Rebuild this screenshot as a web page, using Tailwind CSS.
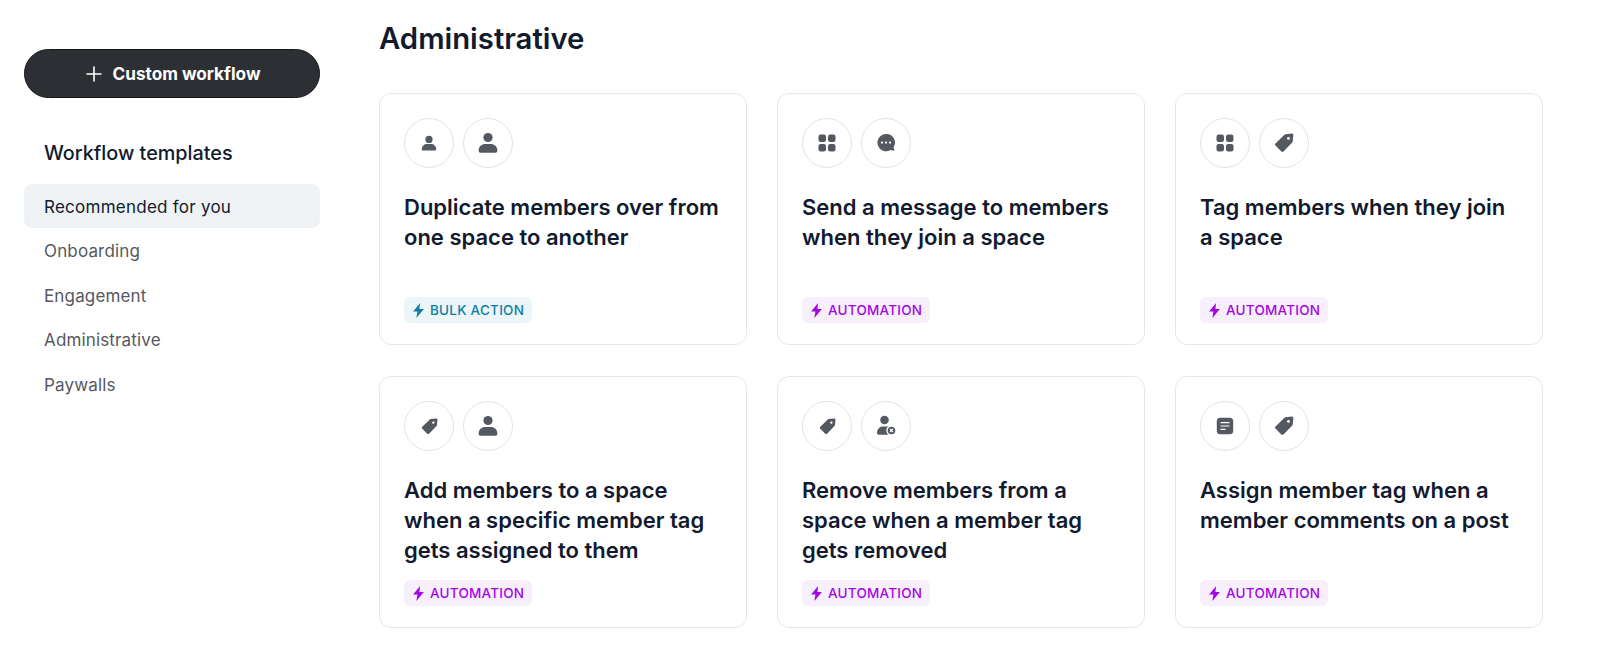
<!DOCTYPE html>
<html lang="en">
<head>
    <meta charset="UTF-8">
    <title>Workflow templates</title>
    <script src="https://cdn.jsdelivr.net/npm/@tailwindcss/browser@4"></script>
</head>
<body class="bg-white font-['Inter',sans-serif] overflow-hidden">
<div class="flex h-[655px] w-[1600px]">

    <!-- sidebar -->
    <aside class="w-[296px] ml-6 mr-[59px] shrink-0 pt-[49px]">
        <button class="flex items-center justify-center gap-[9px] w-full h-[49px] pt-[1px] pl-[2px] rounded-full bg-[#2c2f33] border border-[#14161a] text-white text-[17.2px] font-bold">
            <svg class="w-[18px] h-[18px]" viewBox="0 0 18 18" fill="none" stroke="currentColor" stroke-width="1.6"><path d="M9 1.500v15M1.500 9h15"/></svg>
            Custom workflow
        </button>
        <h2 class="mt-[43px] ml-5 text-[19.8px] leading-[24px] font-medium text-[#111a2e]">Workflow templates</h2>
        <nav class="mt-[19px] flex flex-col text-[17px] tracking-[0.15px] text-[#545861]">
            <a class="h-[44px] flex items-center px-5 pt-[3px] rounded-lg bg-[#f0f3f5] text-[#111a2e] tracking-[0.25px]">Recommended for you</a>
            <a class="h-[44.5px] flex items-center px-5 pt-[3px]">Onboarding</a>
            <a class="h-[44.5px] flex items-center px-5 pt-[3px]">Engagement</a>
            <a class="h-[44.5px] flex items-center px-5 pt-[3px]">Administrative</a>
            <a class="h-[44.5px] flex items-center px-5 pt-[3px]">Paywalls</a>
        </nav>
    </aside>

    <!-- main -->
    <main class="w-[1164px]">
        <h1 class="mt-[20px] text-[29.3px] leading-[38px] font-semibold text-[#111a2e]">Administrative</h1>
        <div class="mt-[35px] grid grid-cols-3 gap-x-[30px] gap-y-[31px]">

            <div class="h-[252px] rounded-xl border border-[#e4e7eb] px-6 pt-6 pb-[21px] flex flex-col">
                <div class="flex gap-[9px]">
                    <span class="w-[50px] h-[50px] rounded-full border border-[#e0e3e7] flex items-center justify-center text-[#545861]">
                        <svg class="w-[18px] h-[18px]" viewBox="0 0 18 18" fill="currentColor"><circle cx="9" cy="5.400" r="3.600"/><path d="M1.800 15.500c0-3.600 2.600-5.500 5.200-5.500h4c2.600 0 5.200 1.900 5.200 5.500 0 .6-.4 1-1 1H2.800c-.6 0-1-.4-1-1z"/></svg>
                    </span>
                    <span class="w-[50px] h-[50px] rounded-full border border-[#e0e3e7] flex items-center justify-center text-[#545861]">
                        <svg class="w-[20px] h-[22px]" viewBox="0 0 18 20" fill="currentColor"><circle cx="9" cy="5" r="4.200"/><path d="M0.500 17c0-4 3-6 6-6h5c3 0 6 2 6 6 0 1-.6 1.800-1.600 1.800H2.100c-1 0-1.600-.8-1.600-1.800z"/></svg>
                    </span>
                </div>
                <h3 class="mt-6 text-[22px] leading-[30px] font-semibold text-[#111a2e]">Duplicate members over from one space to another</h3>
                <span class="mt-auto self-start h-[26px] flex items-center gap-[5px] px-2 rounded-md bg-[#ecf5f8] text-[#0f7fa3] text-[13.5px] font-medium tracking-[0.25px]">
                    <svg class="w-[13px] h-[15px]" viewBox="0 0 12 14" fill="currentColor"><path d="M7.500 0 1 8h4l-1 6 7-8.500H6.800z"/></svg>
                    BULK ACTION
                </span>
            </div>

            <div class="h-[252px] rounded-xl border border-[#e4e7eb] px-6 pt-6 pb-[21px] flex flex-col">
                <div class="flex gap-[9px]">
                    <span class="w-[50px] h-[50px] rounded-full border border-[#e0e3e7] flex items-center justify-center text-[#545861]">
                        <svg class="w-[18px] h-[18px]" viewBox="0 0 18 18" fill="currentColor"><rect x="0.500" y="0.500" width="7.500" height="7.500" rx="2.200"/><rect x="10" y="0.500" width="7.500" height="7.500" rx="2.200"/><rect x="0.500" y="10" width="7.500" height="7.500" rx="2.200"/><rect x="10" y="10" width="7.500" height="7.500" rx="2.200"/></svg>
                    </span>
                    <span class="w-[50px] h-[50px] rounded-full border border-[#e0e3e7] flex items-center justify-center text-[#545861]">
                        <svg class="w-[20px] h-[20px]" viewBox="0 0 20 20"><path fill="currentColor" d="M10 1a8.600 8.600 0 1 0 4.600 15.900l3 .9c.5.100.8-.2.700-.7l-.9-2.600A8.600 8.600 0 0 0 10 1z"/><circle cx="6" cy="9.600" r="1.150" fill="#fff"/><circle cx="10" cy="9.600" r="1.150" fill="#fff"/><circle cx="14" cy="9.600" r="1.150" fill="#fff"/></svg>
                    </span>
                </div>
                <h3 class="mt-6 text-[22px] leading-[30px] font-semibold text-[#111a2e]">Send a message to members when they join a space</h3>
                <span class="mt-auto self-start h-[26px] flex items-center gap-[5px] px-2 rounded-md bg-[#f8effc] text-[#a307e0] text-[13.5px] font-medium tracking-[0.25px]">
                    <svg class="w-[13px] h-[15px]" viewBox="0 0 12 14" fill="currentColor"><path d="M7.500 0 1 8h4l-1 6 7-8.500H6.800z"/></svg>
                    AUTOMATION
                </span>
            </div>

            <div class="h-[252px] rounded-xl border border-[#e4e7eb] px-6 pt-6 pb-[21px] flex flex-col">
                <div class="flex gap-[9px]">
                    <span class="w-[50px] h-[50px] rounded-full border border-[#e0e3e7] flex items-center justify-center text-[#545861]">
                        <svg class="w-[18px] h-[18px]" viewBox="0 0 18 18" fill="currentColor"><rect x="0.500" y="0.500" width="7.500" height="7.500" rx="2.200"/><rect x="10" y="0.500" width="7.500" height="7.500" rx="2.200"/><rect x="0.500" y="10" width="7.500" height="7.500" rx="2.200"/><rect x="10" y="10" width="7.500" height="7.500" rx="2.200"/></svg>
                    </span>
                    <span class="w-[50px] h-[50px] rounded-full border border-[#e0e3e7] flex items-center justify-center text-[#545861]">
                        <svg class="w-[20px] h-[20px]" viewBox="0 0 20 20"><path fill="currentColor" d="M11.500 1.200 17.800 0.500c.9-.1 1.700.7 1.600 1.600l-.7 6.300c0 .4-.2.800-.5 1.100l-8.700 8.900c-.6.600-1.600.6-2.200 0L1.500 12.600c-.6-.6-.6-1.600 0-2.200l8.900-8.700c.3-.3.700-.5 1.100-.5z"/><circle cx="14.500" cy="5.400" r="1.400" fill="#fff"/></svg>
                    </span>
                </div>
                <h3 class="mt-6 text-[22px] leading-[30px] font-semibold text-[#111a2e]">Tag members when they join a space</h3>
                <span class="mt-auto self-start h-[26px] flex items-center gap-[5px] px-2 rounded-md bg-[#f8effc] text-[#a307e0] text-[13.5px] font-medium tracking-[0.25px]">
                    <svg class="w-[13px] h-[15px]" viewBox="0 0 12 14" fill="currentColor"><path d="M7.500 0 1 8h4l-1 6 7-8.500H6.800z"/></svg>
                    AUTOMATION
                </span>
            </div>

            <div class="h-[252px] rounded-xl border border-[#e4e7eb] px-6 pt-6 pb-[21px] flex flex-col">
                <div class="flex gap-[9px]">
                    <span class="w-[50px] h-[50px] rounded-full border border-[#e0e3e7] flex items-center justify-center text-[#545861]">
                        <svg class="w-[17px] h-[17px]" viewBox="0 0 20 20"><path fill="currentColor" d="M11.500 1.200 17.800 0.500c.9-.1 1.700.7 1.600 1.600l-.7 6.300c0 .4-.2.800-.5 1.100l-8.700 8.900c-.6.600-1.600.6-2.200 0L1.500 12.600c-.6-.6-.6-1.600 0-2.200l8.900-8.700c.3-.3.700-.5 1.100-.5z"/><circle cx="14.500" cy="5.400" r="1.400" fill="#fff"/></svg>
                    </span>
                    <span class="w-[50px] h-[50px] rounded-full border border-[#e0e3e7] flex items-center justify-center text-[#545861]">
                        <svg class="w-[20px] h-[22px]" viewBox="0 0 18 20" fill="currentColor"><circle cx="9" cy="5" r="4.200"/><path d="M0.500 17c0-4 3-6 6-6h5c3 0 6 2 6 6 0 1-.6 1.800-1.600 1.800H2.100c-1 0-1.600-.8-1.600-1.800z"/></svg>
                    </span>
                </div>
                <h3 class="mt-6 text-[22px] leading-[30px] font-semibold text-[#111a2e]">Add members to a space when a specific member tag gets assigned to them</h3>
                <span class="mt-auto self-start h-[26px] flex items-center gap-[5px] px-2 rounded-md bg-[#f8effc] text-[#a307e0] text-[13.5px] font-medium tracking-[0.25px]">
                    <svg class="w-[13px] h-[15px]" viewBox="0 0 12 14" fill="currentColor"><path d="M7.500 0 1 8h4l-1 6 7-8.500H6.800z"/></svg>
                    AUTOMATION
                </span>
            </div>

            <div class="h-[252px] rounded-xl border border-[#e4e7eb] px-6 pt-6 pb-[21px] flex flex-col">
                <div class="flex gap-[9px]">
                    <span class="w-[50px] h-[50px] rounded-full border border-[#e0e3e7] flex items-center justify-center text-[#545861]">
                        <svg class="w-[17px] h-[17px]" viewBox="0 0 20 20"><path fill="currentColor" d="M11.500 1.200 17.800 0.500c.9-.1 1.700.7 1.600 1.600l-.7 6.300c0 .4-.2.800-.5 1.100l-8.700 8.900c-.6.600-1.600.6-2.200 0L1.500 12.600c-.6-.6-.6-1.600 0-2.200l8.900-8.700c.3-.3.700-.5 1.100-.5z"/><circle cx="14.500" cy="5.400" r="1.400" fill="#fff"/></svg>
                    </span>
                    <span class="w-[50px] h-[50px] rounded-full border border-[#e0e3e7] flex items-center justify-center text-[#545861]">
                        <svg class="w-[21px] h-[22px]" viewBox="0 0 21 22"><circle cx="8.500" cy="5" r="4.300" fill="currentColor"/><path fill="currentColor" d="M1 18c0-4 3-6.500 5.500-6.500h5c2 0 3 .5 4 1.500v6.700H2.800C1.700 19.700 1 19 1 18z"/><circle cx="15.500" cy="15.500" r="5.200" fill="#fff"/><circle cx="15.500" cy="15.500" r="3.800" fill="currentColor"/><path d="M14 14l3 3M17 14l-3 3" stroke="#fff" stroke-width="1.100"/></svg>
                    </span>
                </div>
                <h3 class="mt-6 text-[22px] leading-[30px] font-semibold text-[#111a2e]">Remove members from a space when a member tag gets removed</h3>
                <span class="mt-auto self-start h-[26px] flex items-center gap-[5px] px-2 rounded-md bg-[#f8effc] text-[#a307e0] text-[13.5px] font-medium tracking-[0.25px]">
                    <svg class="w-[13px] h-[15px]" viewBox="0 0 12 14" fill="currentColor"><path d="M7.500 0 1 8h4l-1 6 7-8.500H6.800z"/></svg>
                    AUTOMATION
                </span>
            </div>

            <div class="h-[252px] rounded-xl border border-[#e4e7eb] px-6 pt-6 pb-[21px] flex flex-col">
                <div class="flex gap-[9px]">
                    <span class="w-[50px] h-[50px] rounded-full border border-[#e0e3e7] flex items-center justify-center text-[#545861]">
                        <svg class="w-[18px] h-[18px]" viewBox="0 0 18 18"><rect x="0.800" y="0.800" width="16.400" height="16.400" rx="3.500" fill="currentColor"/><path d="M4.500 5.600h9M4.500 9h9M4.500 12.400h5" stroke="#fff" stroke-width="1.200"/></svg>
                    </span>
                    <span class="w-[50px] h-[50px] rounded-full border border-[#e0e3e7] flex items-center justify-center text-[#545861]">
                        <svg class="w-[20px] h-[20px]" viewBox="0 0 20 20"><path fill="currentColor" d="M11.500 1.200 17.800 0.500c.9-.1 1.700.7 1.600 1.600l-.7 6.300c0 .4-.2.800-.5 1.100l-8.700 8.900c-.6.600-1.600.6-2.200 0L1.500 12.600c-.6-.6-.6-1.600 0-2.200l8.900-8.700c.3-.3.700-.5 1.100-.5z"/><circle cx="14.500" cy="5.400" r="1.400" fill="#fff"/></svg>
                    </span>
                </div>
                <h3 class="mt-6 text-[22px] leading-[30px] font-semibold text-[#111a2e]">Assign member tag when a member comments on a post</h3>
                <span class="mt-auto self-start h-[26px] flex items-center gap-[5px] px-2 rounded-md bg-[#f8effc] text-[#a307e0] text-[13.5px] font-medium tracking-[0.25px]">
                    <svg class="w-[13px] h-[15px]" viewBox="0 0 12 14" fill="currentColor"><path d="M7.500 0 1 8h4l-1 6 7-8.500H6.800z"/></svg>
                    AUTOMATION
                </span>
            </div>

        </div>
    </main>
</div>
</body>
</html>
